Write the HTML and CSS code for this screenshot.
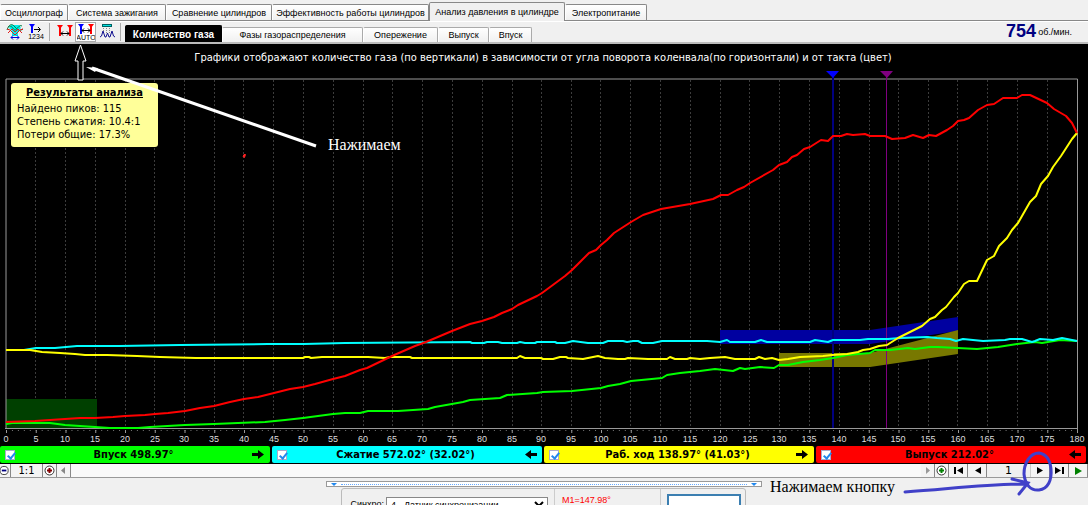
FILE: index.html
```html
<!DOCTYPE html>
<html lang="ru">
<head>
<meta charset="utf-8">
<title>Анализ давления в цилиндре</title>
<link rel="stylesheet" href="styles.css">
</head>
<body>
<div class="app">
  <nav class="tabs">
    <button class="tab">Осциллограф</button>
    <button class="tab">Система зажигания</button>
    <button class="tab">Сравнение цилиндров</button>
    <button class="tab">Эффективность работы цилиндров</button>
    <button class="tab tab-active">Анализ давления в цилиндре</button>
    <button class="tab">Электропитание</button>
  </nav>

  <div class="toolbar">
    <div class="tools">
      <button class="tool" aria-label="Осциллограмма">
        <svg width="18" height="18" viewBox="0 0 18 18" fill="none">
          <path d="M5 2h8l2 3-3 3v5H6V8L3 5z" fill="#00f0f0"/>
          <path d="M1 7c2-6 5-7 8-3s5 4 8 2M2 4c4-3 5 3 7 3s4-6 7-4" stroke="#008040"/>
          <path d="M1 6l3 1 5 5 5-5 3-1M2 10l4-4 3 3 3-3 4 4" stroke="#e02020"/>
          <path d="M5 14.500h8M7 12.500l-2 2 2 2M11 12.500l2 2-2 2" stroke="#0000e0"/>
        </svg>
      </button>
      <button class="tool" aria-label="Нумерация">
        <svg width="18" height="18" viewBox="0 0 18 18">
          <path d="M2 1h6L5 5z" fill="#00f"/><path d="M5 2v8" stroke="#00f" stroke-width="2"/>
          <path d="M7 6.500h6M11 4l2.500 2.500L11 9" stroke="#000" fill="none"/>
          <text x="9" y="16" class="icon-text">1234</text>
        </svg>
      </button>
      <span class="rule"></span>
      <button class="tool" aria-label="Интервал">
        <svg width="18" height="18" viewBox="0 0 18 18">
          <path d="M1 2h6L4 6zM11 2h6l-3 4z" fill="#f00"/><path d="M4 3v10M14 3v10" stroke="#f00" stroke-width="2"/>
          <path d="M5 10.500h8M7 8.500l-2 2 2 2M11 8.500l2 2-2 2" stroke="#000" fill="none"/>
        </svg>
      </button>
      <button class="tool tool-pressed" aria-label="Автоматически">
        <svg width="18" height="18" viewBox="0 0 18 18">
          <path d="M1 1h6L4 5z" fill="#00f"/><path d="M4 2v9" stroke="#00f" stroke-width="2"/>
          <path d="M11 1h6l-3 4z" fill="#f00"/><path d="M14 2v9" stroke="#f00" stroke-width="2"/>
          <path d="M5 7.500h8M7 5.500l-2 2 2 2M11 5.500l2 2-2 2" stroke="#000" fill="none"/>
          <text x="9" y="17" class="icon-text">AUTO</text>
        </svg>
      </button>
      <button class="tool" aria-label="Фильтр">
        <svg width="18" height="18" viewBox="0 0 18 18" fill="none">
          <path d="M4 2.500h10" stroke="#006060" stroke-width="3"/><path d="M5 2.500h8" stroke="#00e0e0"/>
          <path d="M5.500 5v5M8.500 5v5M11.500 5v5" stroke="#888" stroke-dasharray="1 1"/>
          <path d="M2 14l1.500-1L5 8l2 6h1l1.500-4 1.500 4h1l2-6 1.500 5 1.500 1" stroke="#101090"/>
        </svg>
      </button>
      <span class="rule"></span>
    </div>
    <nav class="subtabs">
      <button class="subtab subtab-active">Количество газа</button>
      <button class="subtab">Фазы газораспределения</button>
      <button class="subtab">Опережение</button>
      <button class="subtab">Выпуск</button>
      <button class="subtab">Впуск</button>
    </nav>
    <div class="rpm"><strong>754</strong><span>об./мин.</span></div>
  </div>

  <main class="chart">
    <svg class="plot" viewBox="0 44 1088 401" role="img" aria-label="Количество газа">
      <text class="plot-title" x="543" y="61">Графики отображают количество газа (по вертикали) в зависимости от угла поворота коленвала(по горизонтали) и от такта (цвет)</text>
      <path class="grid" d="M35.500 80V428M65.500 80V428M95.500 80V428M125.500 80V428M154.500 80V428M184.500 80V428M214.500 80V428M243.500 80V428M273.500 80V428M303.500 80V428M333.500 80V428M363.500 80V428M392.500 80V428M422.500 80V428M452.500 80V428M482.500 80V428M512.500 80V428M541.500 80V428M571.500 80V428M600.500 80V428M630.500 80V428M660.500 80V428M690.500 80V428M720.500 80V428M749.500 80V428M779.500 80V428M809.500 80V428M839.500 80V428M869.500 80V428M898.500 80V428M928.500 80V428M957.500 80V428M987.500 80V428M1017.500 80V428M1047.500 80V428"/>
      <path fill="#004000" d="M6 399h91v29H6z"/>
      <path fill="#0000a0" d="M720 330H870L958 317V331L870 344H720z"/>
      <path fill="#787800" d="M779 353H870L958 330V354L870 367H779z"/>
      <path class="minor" d="M6 430.500H1078"/>
      <path class="frame" d="M6 428V79H1077.500V431M5 428.500H1078"/>
      <path class="major" d="M6 431.500H1078"/>
      <path d="M833 77V428" stroke="#000080" stroke-width="2"/>
      <path d="M886.500 77V428" stroke="#800080"/>
      <path d="M826 71h13l-6 7z" fill="#00f"/>
      <path d="M880 71h13l-6 7z" fill="#800080"/>
      <polyline class="trace" stroke="#0f0" points="6,424 12,423 50,423 65,425 95,427 110,428 138,428 150,427 185,425 214,424 265,422 285,420 303,418 333,414 345,413 360,413 368,411 398,411 428,409 435,407 463,402 470,400 500,398 507,395 537,393 543,392 572,391 601,388 608,386 620,384 631,381 662,378 667,375 680,373 700,371 715,369 733,371 740,368 745,369 760,367 774,368 779,365 788,365 803,362 820,360 833,358 847,355 870,353 875,350 890,350 908,348 915,349 930,347 938,347 977,349 998,347 1017,344 1035,342 1042,343 1060,340 1077,341"/>
      <polyline class="trace" stroke="#0ff" points="6,350 24,350 36,348 55,348 77,346 119,346 180,345 268,344 304,344 345,343 470,342 472,343 484,343 487,342 498,342 502,343 517,343 520,342 525,343 535,343 537,342 555,342 557,343 565,343 573,341 588,343 603,343 608,341 623,341 627,342 633,341 638,341 642,343 653,343 662,341 707,341 720,342 727,340 730,342 755,342 761,340 767,342 810,342 815,340 828,342 833,340 860,340 868,339 888,339 900,338 927,337 937,338 950,339 956,341 963,339 983,341 1005,340 1010,339 1022,339 1032,342 1035,341 1040,339 1053,340 1062,338 1077,341"/>
      <polyline class="trace" stroke="#ff0" points="6,350 30,350 42,352 60,353 75,354 85,355 107,355 137,356 160,357 196,358 303,358 305,357 309,357 311,358 322,357 368,357 385,358 390,357 410,357 412,358 517,358 520,356 525,358 541,358 543,359 553,359 560,357 566,357 568,358 583,359 598,356 605,358 618,359 625,359 628,358 648,359 667,359 670,357 675,359 687,359 690,358 700,359 710,358 725,357 735,359 755,359 759,357 765,359 772,358 779,360 788,359 800,357 823,356 832,355 847,354 858,352 863,350 870,349 879,346 887,345 898,338 912,331 922,326 930,319 935,317 942,310 946,307 954,297 958,293 964,284 969,281 977,281 987,260 994,256 999,246 1007,238 1012,230 1018,223 1030,202 1036,196 1041,184 1048,176 1053,167 1061,156 1072,139 1077,133"/>
      <polyline class="trace" stroke="#f00" points="6,422 35,421 50,420 65,419 80,418 95,418 113,417 125,416 145,415 155,414 168,413 185,411 200,408 214,406 230,402 244,399 258,397 274,393 290,389 303,387 315,384 333,379 345,376 360,370 367,368 392,356 415,346 426,342 452,331 470,324 482,321 494,317 502,313 512,309 518,305 537,296 542,293 565,276 572,270 578,264 589,253 596,250 601,245 607,240 614,233 631,222 643,215 661,209 690,204 713,199 721,195 728,195 737,190 744,187 750,183 773,170 779,165 787,162 792,157 797,155 804,149 810,147 821,140 828,141 833,136 841,136 847,134 853,135 865,134 870,136 885,136 892,139 905,138 913,135 923,138 929,135 936,136 947,130 953,126 958,121 964,120 969,118 978,110 987,105 994,104 1003,98 1017,98 1022,95 1030,95 1047,103 1054,109 1066,116 1072,123 1077,133"/>
      <g class="axis">
        <text x="6" y="442">0</text><text x="36" y="442">5</text><text x="65" y="442">10</text><text x="95" y="442">15</text><text x="125" y="442">20</text><text x="155" y="442">25</text><text x="184" y="442">30</text><text x="214" y="442">35</text><text x="244" y="442">40</text><text x="274" y="442">45</text><text x="303" y="442">50</text><text x="333" y="442">55</text><text x="363" y="442">60</text><text x="392" y="442">65</text><text x="422" y="442">70</text><text x="452" y="442">75</text><text x="482" y="442">80</text><text x="512" y="442">85</text><text x="541" y="442">90</text><text x="571" y="442">95</text><text x="601" y="442">100</text><text x="630" y="442">105</text><text x="660" y="442">110</text><text x="690" y="442">115</text><text x="720" y="442">120</text><text x="750" y="442">125</text><text x="779" y="442">130</text><text x="809" y="442">135</text><text x="839" y="442">140</text><text x="869" y="442">145</text><text x="898" y="442">150</text><text x="928" y="442">155</text><text x="958" y="442">160</text><text x="987" y="442">165</text><text x="1017" y="442">170</text><text x="1047" y="442">175</text><text x="1077" y="442">180</text>
      </g>
    </svg>
    <section class="results">
      <h2>Результаты анализа</h2>
      <p>Найдено пиков: 115</p>
      <p>Степень сжатия: 10.4:1</p>
      <p>Потери общие: 17.3%</p>
    </section>
  </main>

  <div class="strokes">
    <label class="stroke intake"><input type="checkbox" checked><span>Впуск 498.97°</span><svg width="13" height="9" viewBox="0 0 13 9"><path d="M0 3h6V0l6 4.500L6 9V6H0z"/></svg></label>
    <label class="stroke compression"><input type="checkbox" checked><span>Сжатие 572.02° (32.02°)</span><svg width="13" height="9" viewBox="0 0 13 9"><path d="M13 3H7V0L1 4.500 7 9V6h6z"/></svg></label>
    <label class="stroke power"><input type="checkbox" checked><span>Раб. ход 138.97° (41.03°)</span><svg width="13" height="9" viewBox="0 0 13 9"><path d="M0 3h6V0l6 4.500L6 9V6H0z"/></svg></label>
    <label class="stroke exhaust"><input type="checkbox" checked><span>Выпуск 212.02°</span><svg width="13" height="9" viewBox="0 0 13 9"><path d="M13 3H7V0L1 4.500 7 9V6h6z"/></svg></label>
  </div>

  <div class="scroller">
    <button class="step step-half" aria-label="Уменьшить"><svg width="11" height="11" viewBox="0 0 11 11"><circle cx="4.500" cy="5.500" r="4.500" fill="#fff" stroke="#333"/><path d="M2 5.500h5" stroke="#000080" stroke-width="2"/></svg></button>
    <button class="step step-wide">1:1</button>
    <button class="step" aria-label="Увеличить"><svg width="11" height="11" viewBox="0 0 11 11"><circle cx="5.500" cy="5.500" r="4.500" fill="#fff" stroke="#333"/><path d="M3 5.500h5M5.500 3v5" stroke="#800000" stroke-width="2"/></svg></button>
    <button class="step" aria-label="Влево"><svg width="5" height="7" viewBox="0 0 5 7"><path d="M4 0v7L0 3.500z" fill="#888"/></svg></button>
    <div class="track"></div>
    <button class="step" aria-label="Вправо"><svg width="5" height="7" viewBox="0 0 5 7"><path d="M1 0v7l4-3.500z" fill="#999"/></svg></button>
    <button class="step" aria-label="Добавить"><svg width="11" height="11" viewBox="0 0 11 11"><circle cx="5.500" cy="5.500" r="4.500" fill="#fff" stroke="#333"/><path d="M3 5.500h5M5.500 3v5" stroke="#008000" stroke-width="2"/></svg></button>
    <button class="step step-nav" aria-label="Первый"><svg width="9" height="7" viewBox="0 0 9 7"><path d="M0 0h2v7H0zM9 0v7L3 3.500z"/></svg></button>
    <button class="step step-nav" aria-label="Предыдущий"><svg width="7" height="7" viewBox="0 0 7 7"><path d="M7 0v7L1 3.500z"/></svg></button>
    <input class="page" type="text" value="1" aria-label="Номер">
    <button class="step step-nav" aria-label="Следующий"><svg width="7" height="7" viewBox="0 0 7 7"><path d="M0 0v7l6-3.500z"/></svg></button>
    <button class="step step-nav" aria-label="Последний"><svg width="9" height="7" viewBox="0 0 9 7"><path d="M7 0h2v7H7zM0 0v7l6-3.500z"/></svg></button>
    <button class="step step-nav" aria-label="Пуск"><svg width="7" height="8" viewBox="0 0 7 8"><path d="M0 0v8l7-4z" fill="#008000"/></svg></button>
  </div>

  <div class="lower">
    <div class="splitter"><i></i><b></b><i></i></div>
    <div class="group">
      <div class="sync">
        <label for="sync">Синхро:</label>
        <select id="sync"><option>4 - Датчик синхронизации</option></select>
      </div>
      <div class="marker">M1=147.98°</div>
      <button class="apply" aria-label="Применить"></button>
    </div>
  </div>

  <svg class="notes" viewBox="0 0 1088 505">
    <path d="M80.500 45L75 61h3v19h5V61h3z" fill="#000" stroke="#fff"/>
    <path d="M92 68L316 146" stroke="#fff" stroke-width="3"/>
    <path d="M86 67l12 1-3 4z" fill="#fff"/>
    <path d="M244 154.500l1.500 0-1 3-1.500-1z" fill="#f22" stroke="#f22"/>
    <text x="328" y="150" class="note note-light">Нажимаем</text>
    <text x="770" y="492" class="note">Нажимаем кнопку</text>
    <g fill="none" stroke="#4040c8" stroke-width="3" stroke-linecap="round">
      <path d="M905 492C950 489 985 484 1027 484M1012 479L1028 483L1019 494"/>
      <path d="M1039 453C1030 453 1024 463 1024 474C1025 485 1031 491 1039 490C1048 489 1052 480 1051 469C1050 459 1046 454 1039 453z"/>
    </g>
  </svg>
</div>
</body>
</html>
```

FILE: styles.css
```css
* { box-sizing: border-box; }

body {
  margin: 0;
  background: #f0f0f0;
  color: #000;
  font-family: "Liberation Sans", Arial, sans-serif;
  font-size: 9px;
  overflow: hidden;
}

button, input, select { font: inherit; color: inherit; }

button { padding: 0; margin: 0; border: 0; background: none; }

.app { position: relative; height: 100vh; overflow: hidden; }

/* Main tabs */
.tabs {
  display: grid;
  grid-template-columns: 68px 98px 106px 157px 136px 82px;
  align-items: end;
  height: 21px;
  border-bottom: 1px solid #888;
}

.tab {
  height: 16px;
  border: 1px solid #888;
  border-left-color: #fff;
  border-bottom: 0;
  border-radius: 2px 2px 0 0;
  background: linear-gradient(#fff, #f0f0f0);
  white-space: nowrap;
}

.tab-active {
  height: 19px;
  margin-bottom: -1px;
  background: #f0f0f0;
  border-left-color: #888;
}

/* Toolbar */
.toolbar {
  display: flex;
  height: 23px;
  border-bottom: 2px solid #bbb;
  box-shadow: inset 0 1px #fff;
}

.tools { display: flex; align-items: center; padding-left: 4px; }

.tool {
  display: flex;
  align-items: center;
  justify-content: center;
  width: 21px;
  height: 20px;
}

.tool-pressed { border: 1px solid #aaa; background: #fff; }

.icon-text { font: 7px "Liberation Sans", Arial, sans-serif; text-anchor: middle; }

.rule { width: 1px; height: 18px; margin: 0 4px 0 3px; background: #aaa; }

.subtabs {
  flex: 1;
  display: grid;
  grid-template-columns: 97px 141px 75px 51px 43px;
  align-items: end;
}

.subtab {
  height: 15px;
  border: 1px solid #aaa;
  border-left-color: #fff;
  border-bottom: 0;
  border-radius: 2px 2px 0 0;
  background: linear-gradient(#fff, #f0f0f0);
  white-space: nowrap;
}

.subtab-active {
  height: 17px;
  background: #000;
  color: #fff;
  border-color: #000;
  font: bold 10px "Liberation Sans", Arial, sans-serif;
}

.rpm { display: flex; align-items: center; gap: 2px; padding-right: 16px; }
.rpm strong { color: #000080; font: bold 18px "Liberation Sans", Arial, sans-serif; }

/* Chart */
.chart { position: relative; background: #000; }

.plot { display: block; width: 100%; height: auto; }

.plot-title {
  fill: #fff;
  font-family: "DejaVu Sans Condensed", "DejaVu Sans", sans-serif;
  font-size: 11px;
  text-anchor: middle;
}

.grid { stroke: #3c3c3c; stroke-dasharray: 2 2; fill: none; }
.frame { stroke: #999; fill: none; }
.minor { stroke: #777; stroke-dasharray: 1 4.950; }
.major { stroke: #999; stroke-width: 3; stroke-dasharray: 1 28.750; }
.trace { fill: none; stroke-width: 2; stroke-linejoin: round; }
.axis text { fill: #ddd; font: 9px "Liberation Sans", Arial, sans-serif; text-anchor: middle; }

.results {
  position: absolute;
  left: 11px;
  top: 39px;
  width: 147px;
  padding: 3px 6px 6px;
  border-radius: 3px;
  background: #ff9;
  font: 11px/13px "DejaVu Sans Condensed", "DejaVu Sans", sans-serif;
  white-space: nowrap;
}

.results h2 { margin: 0 0 3px; font-size: 11px; line-height: 13px; text-align: center; text-decoration: underline; }
.results p { margin: 0; }

/* Stroke selector */
.strokes {
  display: grid;
  grid-template-columns: repeat(4, 1fr);
  gap: 2px;
  padding: 1px 2px 1px 0;
  background: #000;
}

.stroke {
  display: flex;
  align-items: center;
  height: 17px;
  padding: 0 5px;
  border-radius: 2px;
  font: bold 11px "DejaVu Sans Condensed", "DejaVu Sans", sans-serif;
}

.stroke span { flex: 1; text-align: center; }

.stroke input {
  appearance: none;
  width: 10px;
  height: 10px;
  margin: 0;
  background: #fff;
  border: 1px solid #aac;
}

.stroke input:checked::after {
  content: "";
  display: block;
  width: 3px;
  height: 6px;
  margin: 0 0 0 3px;
  border: solid #28e;
  border-width: 0 2px 2px 0;
  transform: rotate(40deg);
}

.intake { background: #0f0; }
.compression { background: #0ff; }
.power { background: #ff0; }
.exhaust { background: #f00; }

/* Scroll and navigation */
.scroller {
  display: flex;
  height: 14px;
  border-bottom: 1px solid #999;
}

.step {
  display: flex;
  align-items: center;
  justify-content: center;
  width: 14px;
  border-right: 1px solid #888;
  background: #f4f4f4;
}

.step-half { width: 11px; justify-content: flex-start; }
.step-wide { width: 32px; font: 11px/12px "DejaVu Sans Condensed", "DejaVu Sans", sans-serif; }
.step-nav { width: 19px; }
.track { flex: 1; background: #f9f9f9; }
.page { width: 44px; padding: 0; border: 0; border-right: 1px solid #ccc; background: #f0f0f0; text-align: center; font: 11px/12px "DejaVu Sans", sans-serif; }

/* Lower panel */
.lower { padding: 3px 30%; }

.splitter {
  display: flex;
  align-items: center;
  gap: 4px;
  height: 6px;
  padding: 0 4px;
  border: 1px solid #999;
  background: #fff;
}

.splitter b { flex: 1; border-top: 1px dotted #6af; }
.splitter i { border: solid transparent; border-width: 3px 3px 0; border-top-color: #28e; }

.group {
  display: flex;
  gap: 6px;
  height: 60px;
  margin: 1px 16px 0 15px;
  padding-left: 8px;
  border: 1px solid #bbb;
  border-radius: 3px;
}

.sync { display: flex; align-items: flex-start; gap: 2px; padding-top: 8px; }
.sync label { padding-top: 2px; white-space: nowrap; }
.sync select { width: 162px; height: 15px; padding: 0; border: 1px solid #888; background: #fff; }

.marker { flex: 1; padding: 6px 7px; border: solid #ccc; border-width: 0 1px; color: #f00; }

.apply { width: 74px; height: 24px; margin: 5px 4px 0 0; border: 2px solid #3c7fb1; background: #fff; }

/* Annotations */
.notes { position: absolute; left: 0; top: 0; width: 100%; height: auto; pointer-events: none; }
.note { font-family: "Liberation Serif", serif; font-size: 16px; }
.note-light { fill: #fff; }
```
